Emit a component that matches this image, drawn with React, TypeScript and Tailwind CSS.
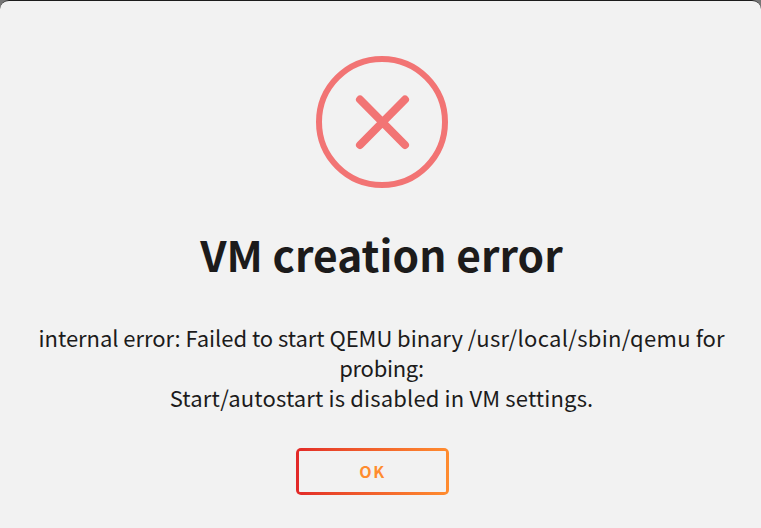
interface ErrorDialogProps {
  title: string;
  children: React.ReactNode;
}

function ErrorIcon() {
  return (
    <svg className="h-[132px] w-[132px]" viewBox="0 0 132 132" fill="none" stroke="#f27474">
      <circle cx="66" cy="66" r="63" strokeWidth="6" />
      <path d="M44 43.5 89 89M89 43.5 44 89" strokeWidth="8" strokeLinecap="round" />
    </svg>
  );
}

function ErrorDialog({ title, children }: ErrorDialogProps) {
  return (
    <div className="flex h-[528px] flex-col items-center rounded-t-[9px] border-t border-[#1c1c1c] bg-[#f2f2f2] pt-[55px] pl-[2px] text-[#1c1b1b]">
      <ErrorIcon />
      <h2 className="mt-[36px] text-[42.5px] leading-[60px] font-bold tracking-[0.05px] whitespace-nowrap">{title}</h2>
      <div className="mt-[38px] text-center text-[22px] leading-[30px] whitespace-nowrap">{children}</div>
      <button className="mt-[36px] mr-[18px] h-[47px] w-[153px] rounded-[5px] bg-linear-to-r from-[#e22828] to-[#ff8c2f] p-[3px]">
        <span className="flex h-full items-center justify-center rounded-[1px] bg-[#f2f2f2] pb-[2px] text-[16px] font-bold tracking-[1.5px] text-[#ff8c2f]">
          OK
        </span>
      </button>
    </div>
  );
}

export default function App() {
  return (
    <div className="h-[528px] overflow-hidden bg-[#777] font-['Noto_Sans_CJK_JP',sans-serif]">
      <ErrorDialog title="VM creation error">
        <p className="tracking-[-0.05px]">
          internal error: Failed to start QEMU binary <span className="tracking-[0.32px]">/usr/local/sbin/qemu</span> for
        </p>
        <p className="tracking-[-0.3px]">probing:</p>
        <p className="tracking-[0.15px]">Start/autostart is disabled in VM settings.</p>
      </ErrorDialog>
    </div>
  );
}
